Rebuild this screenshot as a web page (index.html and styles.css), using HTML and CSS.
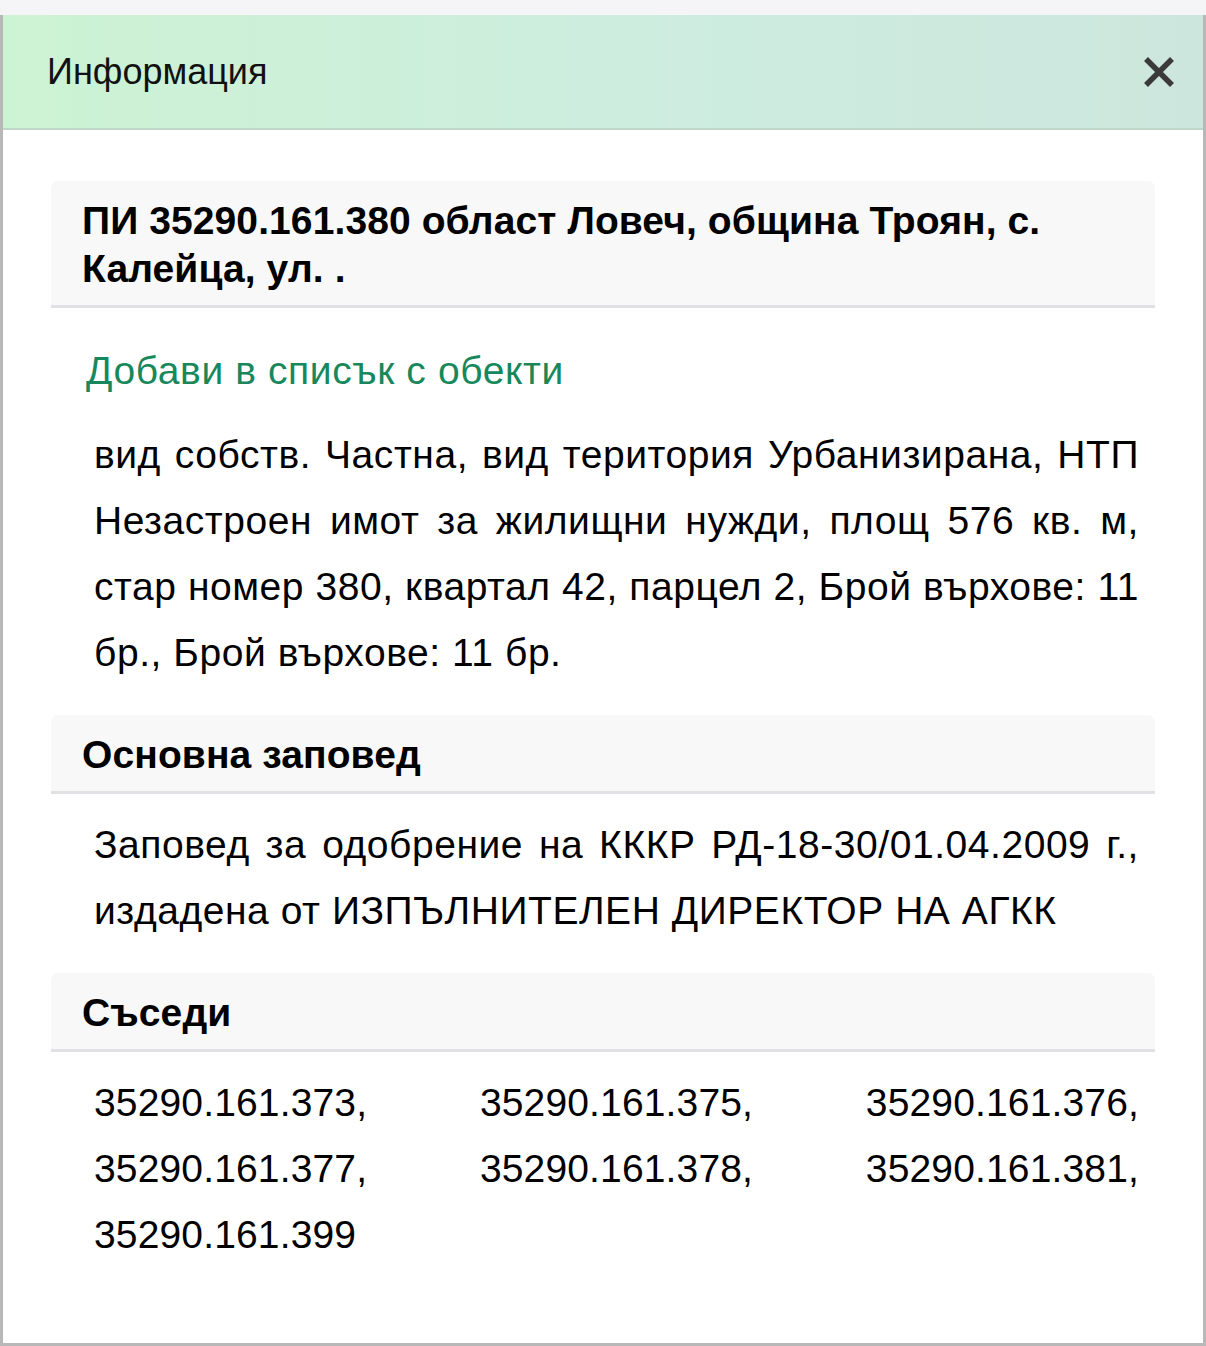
FILE: index.html
```html
<!DOCTYPE html>
<html lang="bg">
<head>
<meta charset="utf-8">
<title>Информация</title>
<link rel="stylesheet" href="styles.css">
</head>
<body>
<div class="modal">
  <div class="modal-header">
    <h1 class="modal-title">Информация</h1>
    <button class="close-btn" aria-label="Затвори">
      <svg width="30" height="30" viewBox="0 0 30 30"><path d="M2 2 L28 28 M28 2 L2 28" stroke="#3a3a3a" stroke-width="5.5" fill="none"/></svg>
    </button>
  </div>
  <div class="modal-body">
    <div class="section-head">ПИ 35290.161.380 област Ловеч, община Троян, с. Калейца, ул. .</div>
    <a class="add-link" href="#">Добави в списък с обекти</a>
    <p class="text">вид собств. Частна, вид територия Урбанизирана, НТП Незастроен имот за жилищни нужди, площ 576 кв. м, стар номер 380, квартал 42, парцел 2, Брой върхове: 11 бр., Брой върхове: 11 бр.</p>
    <div class="section-head spaced">Основна заповед</div>
    <p class="text">Заповед за одобрение на КККР РД-18-30/01.04.2009 г., издадена от ИЗПЪЛНИТЕЛЕН ДИРЕКТОР НА АГКК</p>
    <div class="section-head spaced">Съседи</div>
    <p class="text numbers">35290.161.373, 35290.161.375, 35290.161.376, 35290.161.377, 35290.161.378, 35290.161.381, 35290.161.399</p>
  </div>
</div>
</body>
</html>
```
FILE: styles.css
```css
html, body {
  margin: 0;
  padding: 0;
}
body {
  width: 1206px;
  height: 1346px;
  overflow: hidden;
  background: linear-gradient(#f5f5f7 0, #f5f5f7 15px, #b8b8b8 15px);
  font-family: "Liberation Sans", Arial, Helvetica, sans-serif;
  color: #000;
}
.modal {
  margin: 15px 3px 0 3px;
  background: #fff;
  display: flex;
  flex-direction: column;
}
.modal-header {
  height: 113px;
  border-bottom: 2px solid #bdd8c9;
  background: linear-gradient(90deg, #ccf3d3 0%, #cdece0 60%, #cde6dd 100%);
  display: flex;
  align-items: center;
  justify-content: space-between;
  padding: 0 29px 0 44px;
}
.modal-title {
  margin: 0;
  font-size: 36px;
  font-weight: normal;
  color: #111;
}
.close-btn {
  border: 0;
  background: none;
  padding: 0;
  width: 30px;
  height: 30px;
  display: flex;
  cursor: pointer;
}
.modal-body {
  padding: 51px 48px 75px 48px;
  display: flex;
  flex-direction: column;
}
.section-head {
  background: #f8f8f9;
  border-radius: 7px 7px 0 0;
  border-bottom: 3px solid #e1e1e5;
  padding: 16px 31px 12px 31px;
  font-weight: bold;
  font-size: 39px;
  line-height: 48px;
  letter-spacing: 0.1px;
}
.section-head.spaced {
  margin-top: 29px;
}
.add-link {
  margin-top: 30px;
  padding-left: 35px;
  font-size: 39px;
  line-height: 66px;
  letter-spacing: 0.6px;
  color: #17885c;
  text-decoration: none;
}
.text {
  margin: 18px 16px 0 43px;
  font-size: 39px;
  line-height: 66px;
  letter-spacing: 0.55px;
  text-align: justify;
}
.text.numbers {
  letter-spacing: 0.15px;
}
```
